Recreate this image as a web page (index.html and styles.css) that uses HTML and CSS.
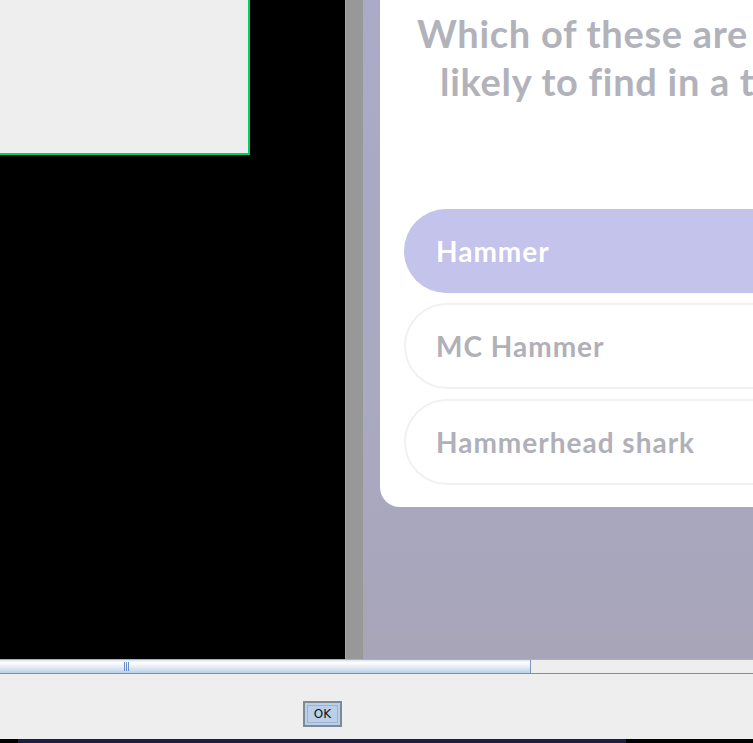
FILE: index.html
```html
<!DOCTYPE html>
<html>
<head>
<meta charset="utf-8">
<link rel="stylesheet" href="styles.css">
</head>
<body>
<div class="screen">
  <div class="main">
    <div class="left">
      <div class="panel"></div>
    </div>
    <div class="divider"></div>
    <div class="gutter"></div>
    <div class="stage">
      <div class="card">
        <div class="question">
          <div class="q1">Which of these are you most</div>
          <div class="q2">likely to find in a toolbox?</div>
        </div>
        <div class="options">
          <div class="option selected">Hammer</div>
          <div class="option">MC Hammer</div>
          <div class="option">Hammerhead shark</div>
        </div>
      </div>
    </div>
  </div>
  <div class="scrollbar">
    <div class="thumb"><span class="grip"></span></div>
    <div class="track"></div>
  </div>
  <div class="footer">
    <button class="ok"><span class="ok-label">OK</span></button>
  </div>
  <div class="strip"><div class="strip-navy"></div></div>
</div>
</body>
</html>
```
FILE: styles.css
```css
html, body {
  margin: 0;
  padding: 0;
  background: #000;
}
.screen {
  width: 753px;
  height: 743px;
  display: flex;
  flex-direction: column;
  overflow: hidden;
}
.main {
  height: 659px;
  display: flex;
  flex: none;
}
.left {
  width: 345px;
  flex: none;
  background: #000;
}
.panel {
  width: 248px;
  height: 153px;
  background: #eeeeee;
  border-right: 2px solid #00d060;
  border-bottom: 2px solid #00d060;
}
.divider {
  width: 1px;
  flex: none;
  background: #e48a8a;
}
.gutter {
  width: 17px;
  flex: none;
  background: #989898;
}
.stage {
  flex: 1;
  overflow: hidden;
  background: linear-gradient(180deg, #abaac8 0%, #aaa9c2 60%, #a8a5b9 100%);
  padding-left: 17px;
}
.card {
  width: 520px;
  background: #fff;
  border-radius: 0 0 0 20px;
  padding: 0 0 22px 24px;
  box-sizing: border-box;
}
.question {
  font-family: "Lato", sans-serif;
  font-weight: 700;
  font-size: 38px;
  letter-spacing: 0.7px;
  color: #b2b2ba;
  line-height: 48px;
  white-space: nowrap;
  padding-top: 9px;
  height: 200px;
  box-sizing: border-box;
}
.q1 { padding-left: 13px; }
.q2 { padding-left: 36px; }
.options {
  display: flex;
  flex-direction: column;
  gap: 10px;
  padding-top: 9px;
}
.option {
  height: 86px;
  box-sizing: border-box;
  border: 2px solid #f1f1f3;
  border-right: none;
  border-radius: 43px 0 0 43px;
  display: flex;
  align-items: center;
  padding-left: 30px;
  font-family: "Lato", sans-serif;
  font-weight: 700;
  font-size: 28px;
  letter-spacing: 1px;
  color: #b0b0b8;
  white-space: nowrap;
}
.option.selected {
  height: 84px;
  border: none;
  background: #c3c3ec;
  color: #fff;
  padding-left: 32px;
}
.scrollbar {
  height: 15px;
  flex: none;
  display: flex;
  background: #eeeeee;
  border-top: 1px solid #9fb3d6;
  border-bottom: 1px solid #7f8ea3;
  box-sizing: border-box;
}
.thumb {
  width: 530px;
  flex: none;
  border-right: 1px solid #7d97c8;
  background: linear-gradient(180deg, #d8e4f3 0%, #ffffff 20%, #e8eff8 50%, #bcd0e8 100%);
  position: relative;
}
.grip {
  position: absolute;
  left: 124px;
  top: 2px;
  width: 1px;
  height: 9px;
  background: #6a8cc9;
  box-shadow: 2px 0 0 #6a8cc9, 4px 0 0 #6a8cc9;
}
.track {
  flex: 1;
  background: #eeeeee;
}
.footer {
  height: 65px;
  flex: none;
  background: #eeeeee;
  display: flex;
  align-items: flex-start;
  padding-left: 303px;
  padding-top: 27px;
  box-sizing: border-box;
}
.ok {
  width: 39px;
  height: 26px;
  box-sizing: border-box;
  border: 2px solid #7c8a98;
  background: #b9d0e8;
  padding: 2px;
  margin: 0;
  display: flex;
  align-items: stretch;
  justify-content: center;
}
.ok-label {
  flex: 1;
  border: 1px solid #9fb4cc;
  font-family: "DejaVu Sans", sans-serif;
  font-size: 12px;
  color: #111;
  display: flex;
  align-items: center;
  justify-content: center;
}
.strip {
  flex: 1;
  background: #000;
  padding-left: 18px;
}
.strip-navy {
  width: 608px;
  height: 100%;
  background: #1d1f42;
}
```
